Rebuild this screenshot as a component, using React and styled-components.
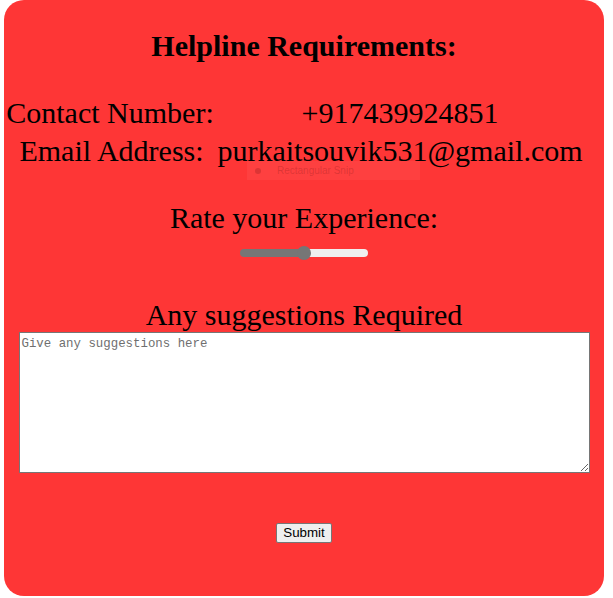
import React, { useState } from "react";
import styled, { createGlobalStyle } from "styled-components";

const Global = createGlobalStyle`
  html, body { margin: 0; padding: 0; background: #ffffff; }
  body { font-family: "Liberation Serif", "Times New Roman", serif; }
`;

const Card = styled.form`
  position: relative;
  box-sizing: border-box;
  width: 600px;
  height: 596px;
  margin-left: 4px;
  padding-top: 29px;
  background: #fe3636;
  border-radius: 20px;
  display: flex;
  flex-direction: column;
  align-items: center;
  color: #000;
`;

const Heading = styled.h2`
  margin: 0;
  font-size: 30px;
  line-height: 34px;
  font-weight: bold;
`;

const InfoTable = styled.div`
  align-self: stretch;
  margin-top: 31px;
  display: grid;
  grid-template-columns: 212px 368px;
  font-size: 30px;
  line-height: 38px;
`;

const Cell = styled.div`
  text-align: center;
  white-space: nowrap;
  padding-left: ${(p) => p.$indent || 0}px;
`;

const Label = styled.div`
  font-size: 30px;
  line-height: 34px;
  margin-top: ${(p) => p.$top || 0}px;
`;

const Range = styled.input`
  -webkit-appearance: none;
  appearance: none;
  margin: 14px 0 0;
  width: 128px;
  height: 8px;
  border-radius: 4px;
  outline: none;
  &::-webkit-slider-thumb {
    -webkit-appearance: none;
    width: 14px;
    height: 14px;
    border-radius: 50%;
    background: #767676;
    border: none;
  }
`;

const TextArea = styled.textarea`
  box-sizing: border-box;
  width: 571px;
  height: 141px;
  margin: 0;
  padding: 4px 2px 2px;
  border: 1px solid #767676;
  background: #fff;
  font-family: "Liberation Mono", monospace;
  font-size: 12.4px;
  line-height: 15px;
  &::placeholder { color: #6f6f6f; }
`;

const SubmitButton = styled.button`
  margin-top: 50px;
  box-sizing: border-box;
  height: 20px;
  padding: 0 6px;
  font-family: "Liberation Sans", Arial, sans-serif;
  font-size: 13.33px;
  line-height: 16px;
  color: #000;
  background: #efefef;
  border: 1px solid #767676;
  border-radius: 2px;
`;

const SnipHint = styled.div`
  position: absolute;
  left: 243px;
  top: 161px;
  width: 173px;
  height: 19px;
  display: flex;
  align-items: center;
  gap: 16px;
  padding-left: 8px;
  box-sizing: border-box;
  background: rgba(255, 255, 255, 0.05);
  font-family: "Liberation Sans", Arial, sans-serif;
  font-size: 10px;
  color: rgba(120, 20, 20, 0.25);
  pointer-events: none;
`;

const Dot = styled.span`
  width: 6px;
  height: 6px;
  border-radius: 50%;
  background: rgba(120, 20, 20, 0.25);
`;

export default function App() {
  const [rate, setRate] = useState(50);
  return (
    <>
      <Global />
      <Card onSubmit={(e) => e.preventDefault()}>
        <Heading>Helpline Requirements:</Heading>
        <InfoTable>
          <Cell>Contact Number:</Cell>
          <Cell>+917439924851</Cell>
          <Cell $indent={3}>Email Address:</Cell>
          <Cell>purkaitsouvik531@gmail.com</Cell>
        </InfoTable>
        <SnipHint>
          <Dot />
          Rectangular Snip
        </SnipHint>
        <Label $top={31}>Rate your Experience:</Label>
        <Range
          type="range"
          min="0"
          max="100"
          value={rate}
          onChange={(e) => setRate(Number(e.target.value))}
          style={{
            background: `linear-gradient(to right, #767676 0%, #767676 ${rate}%, #efefef ${rate}%, #efefef 100%)`,
          }}
        />
        <Label $top={41}>Any suggestions Required</Label>
        <TextArea placeholder="Give any suggestions here" />
        <SubmitButton type="submit">Submit</SubmitButton>
      </Card>
    </>
  );
}
